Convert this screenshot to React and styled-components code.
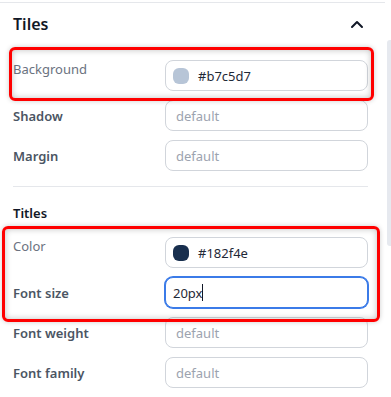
import React from "react";
import styled, { createGlobalStyle } from "styled-components";

const GlobalStyle = createGlobalStyle`
  html, body {
    margin: 0;
    padding: 0;
    background: #ffffff;
    font-family: "Segoe UI", "Noto Sans", "Open Sans", sans-serif;
  }
`;

function Chevron() {
  return (
    <svg width="14" height="10" viewBox="0 0 14 10" fill="none">
      <path d="M2 8 L7 3 L12 8" stroke="#111827" strokeWidth="2" strokeLinecap="round" strokeLinejoin="round" />
    </svg>
  );
}

function Field({ label, value, swatch, placeholder, focused, plain, top }) {
  return (
    <Row top={top}>
      <Label plain={plain}>{label}</Label>
      <InputBox focused={focused}>
        {swatch && <Swatch color={swatch} />}
        {value ? (
          <Value>
            {value}
            {focused && <Caret />}
          </Value>
        ) : (
          <Placeholder>{placeholder}</Placeholder>
        )}
      </InputBox>
    </Row>
  );
}

function App() {
  return (
    <>
      <GlobalStyle />
      <Page>
        <Panel>
          <Header>
            <Title>Tiles</Title>
            <Chevron />
          </Header>

          <Group>
            <Field label="Background" swatch="#b7c5d7" value="#b7c5d7" plain top />
            <Field label="Shadow" placeholder="default" />
            <Field label="Margin" placeholder="default" />
          </Group>

          <Divider />

          <Subtitle>Titles</Subtitle>

          <Group>
            <Field label="Color" swatch="#182f4e" value="#182f4e" plain top />
            <Field label="Font size" value="20px" focused />
            <Field label="Font weight" placeholder="default" />
            <Field label="Font family" placeholder="default" />
          </Group>

          <Highlight style={{ left: 9, top: 44, width: 365, height: 54 }} />
          <Highlight style={{ left: 2, top: 223, width: 378, height: 96 }} />
        </Panel>
        <Scrollbar>
          <Thumb />
        </Scrollbar>
      </Page>
    </>
  );
}

const Page = styled.div`
  display: flex;
  width: 391px;
  height: 397px;
  overflow: hidden;
`;

const Panel = styled.div`
  position: relative;
  flex: 0 0 385px;
  border-top: 1px solid #e5e7eb;
  margin-top: 2px;
  padding: 0 17px 0 13px;
  box-sizing: border-box;
`;

const Scrollbar = styled.div`
  flex: 1;
  padding-top: 40px;
  padding-left: 2px;
`;

const Thumb = styled.div`
  height: 206px;
  background: #e6e9ef;
  border-radius: 3px 0 0 3px;
`;

const Header = styled.div`
  display: flex;
  align-items: center;
  justify-content: space-between;
  height: 42px;
  padding-right: 4px;
`;

const Title = styled.div`
  font-size: 16px;
  font-weight: 600;
  color: #111827;
`;

const Group = styled.div`
  display: flex;
  flex-direction: column;
  gap: 9px;
  padding-top: 15px;
`;

const Row = styled.div`
  display: flex;
  align-items: ${(p) => (p.top ? "flex-start" : "center")};
  justify-content: space-between;
`;

const Label = styled.div`
  font-size: 13px;
  line-height: 16px;
  padding-top: ${(p) => (p.plain ? "1px" : "0")};
  font-weight: ${(p) => (p.plain ? 400 : 600)};
  color: ${(p) => (p.plain ? "#6b7280" : "#4b5563")};
`;

const InputBox = styled.div`
  display: flex;
  align-items: center;
  gap: 9px;
  width: 203px;
  height: 31px;
  box-sizing: border-box;
  padding: 0 10px 0 7px;
  border: 1px solid ${(p) => (p.focused ? "#3b7be8" : "#d1d5db")};
  box-shadow: ${(p) => (p.focused ? "0 0 0 1px #3b7be8" : "none")};
  border-radius: 8px;
  background: #ffffff;
  font-size: 13px;
`;

const Swatch = styled.span`
  width: 16px;
  height: 16px;
  border-radius: 6px;
  background: ${(p) => p.color};
  flex: 0 0 auto;
`;

const Value = styled.span`
  display: flex;
  align-items: center;
  color: #1f2937;
`;

const Caret = styled.span`
  width: 1px;
  height: 17px;
  background: #111827;
`;

const Placeholder = styled.span`
  padding-left: 3px;
  color: #9ca3af;
`;

const Divider = styled.div`
  height: 1px;
  background: #e5e7eb;
  margin-top: 15px;
`;

const Subtitle = styled.div`
  margin-top: 17px;
  font-size: 13px;
  font-weight: 600;
  color: #111827;
`;

const Highlight = styled.div`
  position: absolute;
  box-sizing: border-box;
  border: 3px solid #ff0000;
  border-radius: 6px;
  box-shadow: inset 0 0 6px rgba(0, 0, 0, 0.25), 0 0 5px rgba(0, 0, 0, 0.2);
  pointer-events: none;
`;

export default App;
